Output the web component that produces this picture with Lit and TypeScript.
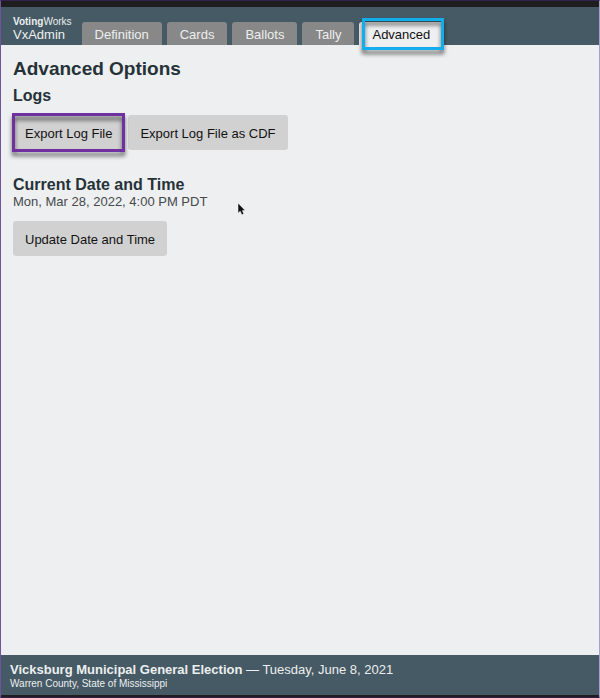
import { LitElement, html, css } from "lit";
import { customElement, state } from "lit/decorators.js";

const TABS = ["Definition", "Cards", "Ballots", "Tally", "Advanced"];

@customElement("app-root")
export class AppRoot extends LitElement {
  @state() private active = "Advanced";

  static styles = css`
    :host {
      display: flex;
      flex-direction: column;
      box-sizing: border-box;
      min-height: 100vh;
      border: 1px solid #6d549b;
      border-top-color: #35214f;
      border-bottom-color: #35214f;
      border-right-color: #a8a0cc;
      background: #edeff0;
      color: #263238;
      font-family: "Liberation Sans", Arial, sans-serif;
      font-size: 13px;
      line-height: 16px;
    }
    .header {
      display: flex;
      align-items: flex-end;
      gap: 10px;
      padding: 8px 12px 0;
      border-top: 6px solid #1e1e1e;
      background: #455a64;
      color: #edeff0;
    }
    .brand {
      padding-bottom: 3px;
      line-height: 14px;
    }
    .maker {
      font-size: 10px;
      line-height: 13px;
    }
    .tabs {
      display: flex;
      gap: 5px;
    }
    .tab {
      height: 23px;
      padding: 2px 13px 0;
      border: 0;
      border-radius: 3px 3px 0 0;
      background: #888888;
      color: #edeff0;
      font: inherit;
    }
    .active {
      background: #edeff0;
      color: #111111;
    }
    .marked {
      position: relative;
    }
    .marked::after {
      content: "";
      position: absolute;
      inset: -3px;
      border: 3px solid #7030a0;
      filter: drop-shadow(0 4px 2px rgba(0, 0, 0, 0.6));
      pointer-events: none;
    }
    .tab.marked::after {
      inset: -4px -1px -5px 3px;
      border-color: #10aeec;
    }
    .button.marked::after {
      inset: -2px -1px;
    }
    .main {
      flex: 1;
      padding: 12px;
    }
    h1,
    h2,
    p {
      margin: 0;
    }
    h1 {
      font-size: 19px;
      line-height: 24px;
    }
    h2 {
      font-size: 16px;
      line-height: 20px;
    }
    .logs {
      margin-top: 5px;
    }
    .actions {
      display: flex;
      gap: 4px;
      margin-top: 9px;
    }
    .clock {
      margin-top: 25px;
    }
    .date {
      color: #45494c;
      line-height: 14px;
    }
    .clock .actions {
      margin-top: 12px;
    }
    .button {
      height: 35px;
      padding: 2px 12px 0;
      border: 0;
      border-radius: 3px;
      background: #d1d1d1;
      color: #111111;
      font: inherit;
    }
    .pointer {
      position: absolute;
      left: 237px;
      top: 202px;
      width: 9px;
      height: 14px;
      pointer-events: none;
    }
    .footer {
      padding: 7px 9px 5px;
      border-bottom: 2px solid #1e1e1e;
      background: #455a64;
      color: #edeff0;
    }
    .place {
      font-size: 10px;
      line-height: 12px;
    }
  `;

  render() {
    return html`
      <header class="header">
        <div class="brand">
          <div class="maker"><strong>Voting</strong>Works</div>
          <div>VxAdmin</div>
        </div>
        <nav class="tabs">
          ${TABS.map(
            (tab) => html`<button
              class="tab ${tab === this.active ? "active marked" : ""}"
              @click=${() => (this.active = tab)}
            >${tab}</button>`
          )}
        </nav>
      </header>
      <main class="main">
        <h1>Advanced Options</h1>
        <section class="logs">
          <h2>Logs</h2>
          <div class="actions">
            <button class="button marked">Export Log File</button>
            <button class="button">Export Log File as CDF</button>
          </div>
        </section>
        <section class="clock">
          <h2>Current Date and Time</h2>
          <p class="date">Mon, Mar 28, 2022, 4:00 PM PDT</p>
          <div class="actions">
            <button class="button">Update Date and Time</button>
          </div>
        </section>
      </main>
      <footer class="footer">
        <div><strong>Vicksburg Municipal General Election</strong> — Tuesday, June 8, 2021</div>
        <div class="place">Warren County, State of Mississippi</div>
      </footer>
      <svg class="pointer" viewBox="0 0 9 14" aria-hidden="true">
        <path d="M1 1V11.2L3.2 9.2L4.8 12.8L6.8 12L5.4 8.6H8.2Z" fill="#111" stroke="#fff" stroke-width="0.5" />
      </svg>
    `;
  }
}
